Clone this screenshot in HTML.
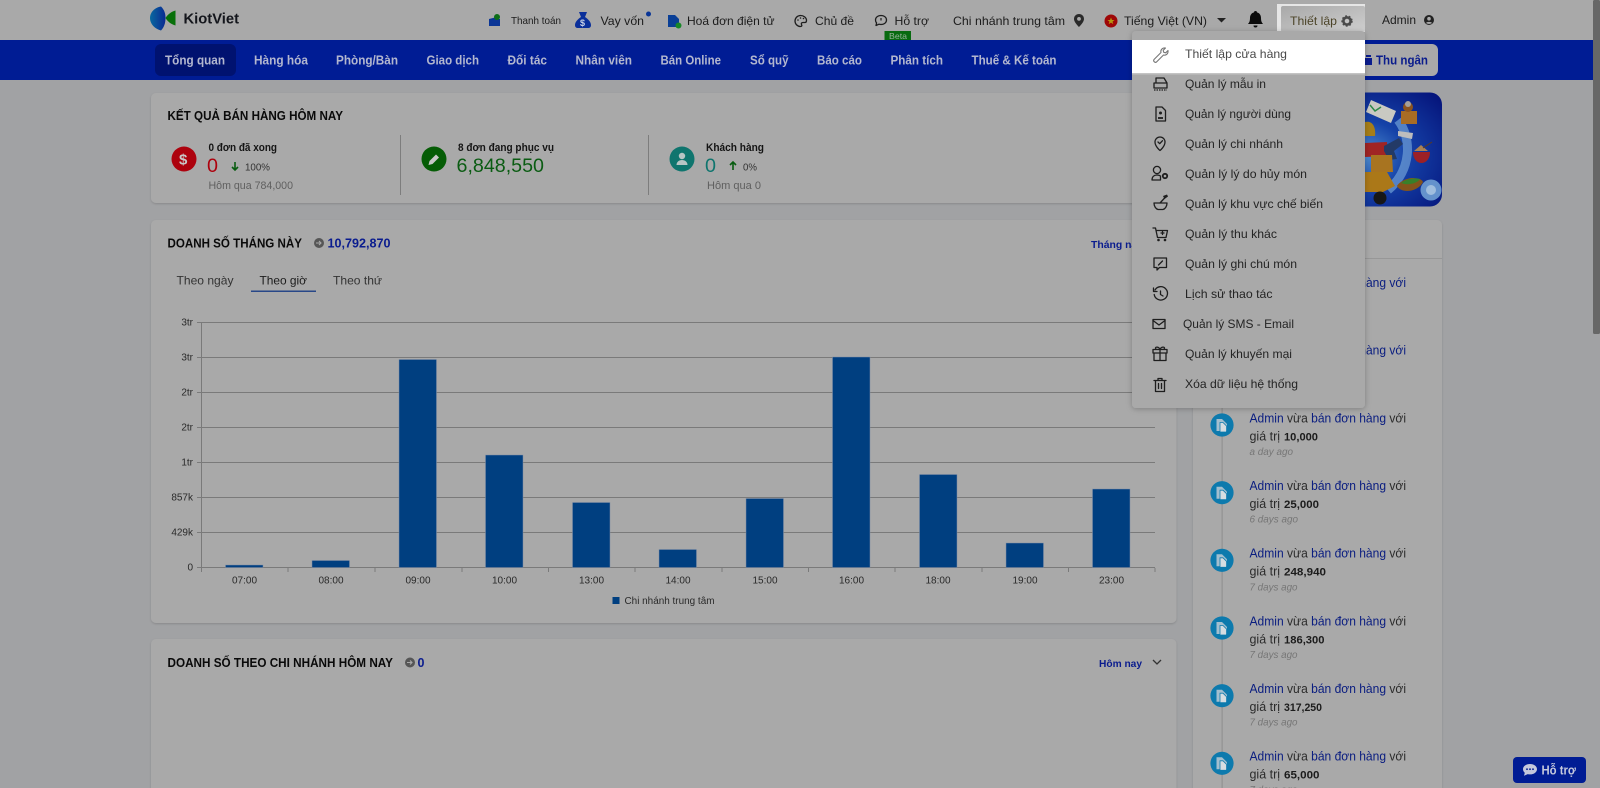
<!DOCTYPE html>
<html lang="vi">
<head>
<meta charset="utf-8">
<title>KiotViet</title>
<style>
html,body{margin:0;padding:0;width:1600px;height:788px;overflow:hidden;background:#a1a2a4}
svg{display:block;position:absolute;left:0;top:0;filter:blur(.35px)}
text{font-family:"Liberation Sans","DejaVu Sans",sans-serif;font-size:12px;fill:#1c1c1c}
.b{font-weight:700}
.nav{font-weight:700;font-size:12.5px;fill:#b3b7cf}
.m{fill:#242424;font-size:12px}
.t{font-weight:700;font-size:12.5px;fill:#0a0a0a}
.g{fill:#5f5f5f;font-size:11px}
.ax{font-size:10px;fill:#2a2a2a}
.lnk{fill:#0a1d80;font-size:12.5px}
.i{font-style:italic;font-size:10.5px;fill:#767676}
.ic{fill:none;stroke:#1e1e1e;stroke-width:1.3;stroke-linecap:round;stroke-linejoin:round}
</style>
</head>
<body>
<svg width="1600" height="788" viewBox="0 0 1600 788" xmlns="http://www.w3.org/2000/svg">
<defs>
<linearGradient id="lg" x1="0" y1="0" x2="1" y2="0"><stop offset="0" stop-color="#08689f"/><stop offset="1" stop-color="#0a2a92"/></linearGradient>
<linearGradient id="btn" x1="0" y1="0" x2="1" y2="1"><stop offset="0" stop-color="#a9a9a9"/><stop offset="1" stop-color="#cfcfcf"/></linearGradient>
<radialGradient id="bn" cx=".45" cy=".55" r=".75"><stop offset="0" stop-color="#4f8ed0"/><stop offset=".4" stop-color="#1542a8"/><stop offset="1" stop-color="#05137a"/></radialGradient>
<filter id="sh" x="-10%" y="-10%" width="120%" height="120%"><feDropShadow dx="0" dy="1" stdDeviation="3" flood-color="#000" flood-opacity=".25"/></filter>
<filter id="s2" x="-5%" y="-5%" width="110%" height="110%"><feDropShadow dx="0" dy="1" stdDeviation="1" flood-color="#000" flood-opacity=".16"/></filter>
<g id="doc"><circle r="11.600" fill="#0d7aad"/><path d="M-5.500-6h5.500l5 5v7h-10.500z" fill="#a3bfcf"/><path d="M-2-2.500h3l3.500 3.500v6h-6.500z" fill="#d6dde1" stroke="#0d7aad" stroke-width=".8"/></g>
</defs>

<rect width="1600" height="788" fill="#a1a2a4"/>
<!-- top bar -->
<rect width="1600" height="40" fill="#a9a9a9"/>
<path d="M161 6.500c-6 1-11 5.500-11 11.500s5 11 11 12.500c3-3 4.500-7.500 4.500-12.500s-1.500-8.500-4.500-11.500z" fill="url(#lg)"/>
<path d="M175.500 10.500v15c-4-1-8-4-10-7.500 2-3.500 6-6.500 10-7.500z" fill="#08700a"/>
<text x="183.500" y="23.500" class="b" style="font-size:15px;fill:#14161c" textLength="55.500" lengthAdjust="spacingAndGlyphs">KiotViet</text>

<path d="M489 19h11v7h-11z" fill="#0a3596"/><path d="M489 19l8-2v2z" fill="#0a3596"/><circle cx="497" cy="17" r="3" fill="#0d6e18"/>
<text x="511" y="24" style="font-size:10.500px" textLength="50" lengthAdjust="spacingAndGlyphs">Thanh toán</text>
<path d="M579 12h8l-2 5c3 2 6 5 6 8 0 2-1 3-3 3h-10c-2 0-3-1-3-3 0-3 3-6 6-8z" fill="#0a2f9a"/><text x="580" y="26" class="b" style="font-size:9px;fill:#c9d2e6">$</text>
<text x="600.500" y="25" textLength="43.500" lengthAdjust="spacingAndGlyphs">Vay vốn</text>
<circle cx="648.500" cy="14" r="2.500" fill="#0a3596"/>
<path d="M668 15h7l4 4v8h-11z" fill="#0a3f96"/><circle cx="678.500" cy="25.500" r="3" fill="#188828"/>
<text x="687" y="25" textLength="87.500" lengthAdjust="spacingAndGlyphs">Hoá đơn điện tử</text>
<path class="ic" d="M800.500 15.500a5.500 5.500 0 1 0 0 11c1.500 0 1.500-1 1-2s0-2 1.500-2h2c1 0 1.500-1 1.500-2 0-3-3-5-6-5z"/>
<circle cx="798" cy="20" r=".8" fill="#1e1e1e"/><circle cx="800.500" cy="18" r=".8" fill="#1e1e1e"/><circle cx="803.500" cy="18.500" r=".8" fill="#1e1e1e"/>
<text x="815" y="25" textLength="39" lengthAdjust="spacingAndGlyphs">Chủ đề</text>
<path class="ic" d="M881 15.500c3.300 0 5.500 2 5.500 4.500s-2.200 4.500-5.500 4.500c-.7 0-1.300 0-2-.3l-3 1.300.6-2.600c-.7-.8-1.100-1.800-1.100-2.900 0-2.500 2.200-4.500 5.500-4.500z"/><path d="M881 18v2.500" stroke="#1e1e1e" stroke-width="1.200"/>
<text x="894.500" y="25" textLength="34.500" lengthAdjust="spacingAndGlyphs">Hỗ trợ</text>
<rect x="884.500" y="31" width="26.500" height="10" fill="#086a10"/>
<text x="889" y="39" style="font-size:8.500px;fill:#97b29a" textLength="18" lengthAdjust="spacingAndGlyphs">Beta</text>
<text x="953" y="25" textLength="112" lengthAdjust="spacingAndGlyphs">Chi nhánh trung tâm</text>
<path d="M1079 14c-3 0-5 2.200-5 5 0 3.300 5 8 5 8s5-4.700 5-8c0-2.800-2-5-5-5zm0 6.800a1.900 1.900 0 1 1 0-3.800 1.900 1.900 0 0 1 0 3.800z" fill="#2a2a2a"/>
<circle cx="1111" cy="21" r="6.500" fill="#9e0707"/><path d="M1111 17.500l1 2.500h2.500l-2 1.600.8 2.500-2.300-1.500-2.300 1.500.8-2.500-2-1.600h2.500z" fill="#b8960f"/>
<text x="1124" y="25" textLength="83" lengthAdjust="spacingAndGlyphs">Tiếng Việt (VN)</text>
<path d="M1217 18h9l-4.500 4.500z" fill="#222"/>
<path d="M1255.500 11c-1 0-1.500.6-1.500 1.400-2.700.7-4 3-4 5.600 0 3-.7 4.500-2 6h15c-1.300-1.500-2-3-2-6 0-2.600-1.300-4.900-4-5.600 0-.8-.5-1.400-1.500-1.400zM1253.500 25.500a2 2 0 0 0 4 0z" fill="#0c0c0c"/>

<rect x="1277" y="4" width="88" height="28" fill="#e6e6e6"/>
<rect x="1281" y="6" width="84" height="26" rx="2" fill="url(#btn)"/>
<text x="1290" y="25" style="fill:#4c4428" textLength="47" lengthAdjust="spacingAndGlyphs">Thiết lập</text>
<circle cx="1347" cy="21" r="3.600" fill="none" stroke="#4a4a4a" stroke-width="2.600"/><circle cx="1347" cy="21" r="5" fill="none" stroke="#4a4a4a" stroke-width="1.400" stroke-dasharray="1.800 1.800"/>
<text x="1382" y="24" textLength="34" lengthAdjust="spacingAndGlyphs">Admin</text>
<circle cx="1429" cy="20" r="5" fill="#222"/><circle cx="1429" cy="18.700" r="1.800" fill="#a9a9a9"/><path d="M1426 23c.8-1.500 5.200-1.500 6 0-1.500 1.200-4.500 1.200-6 0z" fill="#a9a9a9"/>

<!-- nav -->
<rect y="40" width="1600" height="40" fill="#001c94"/>
<rect x="155" y="44" width="81" height="32" rx="6" fill="#001270"/>
<text x="165" y="64.500" class="nav" textLength="60" lengthAdjust="spacingAndGlyphs">Tổng quan</text>
<text x="254" y="64.500" class="nav" textLength="54" lengthAdjust="spacingAndGlyphs">Hàng hóa</text>
<text x="336" y="64.500" class="nav" textLength="62" lengthAdjust="spacingAndGlyphs">Phòng/Bàn</text>
<text x="426.500" y="64.500" class="nav" textLength="52.500" lengthAdjust="spacingAndGlyphs">Giao dịch</text>
<text x="507.500" y="64.500" class="nav" textLength="39.500" lengthAdjust="spacingAndGlyphs">Đối tác</text>
<text x="575.500" y="64.500" class="nav" textLength="56.500" lengthAdjust="spacingAndGlyphs">Nhân viên</text>
<text x="660.500" y="64.500" class="nav" textLength="60.500" lengthAdjust="spacingAndGlyphs">Bán Online</text>
<text x="750" y="64.500" class="nav" textLength="38.500" lengthAdjust="spacingAndGlyphs">Sổ quỹ</text>
<text x="817" y="64.500" class="nav" textLength="45" lengthAdjust="spacingAndGlyphs">Báo cáo</text>
<text x="890.500" y="64.500" class="nav" textLength="52.500" lengthAdjust="spacingAndGlyphs">Phân tích</text>
<text x="971.500" y="64.500" class="nav" textLength="85" lengthAdjust="spacingAndGlyphs">Thuế &amp; Kế toán</text>
<rect x="1330" y="44" width="108" height="32" rx="6" fill="#a9a9a9"/>
<path d="M1365 58h7v7h-7z" fill="#0a1c8e"/><path d="M1366 55h5v2h-5z" fill="#0a1c8e"/>
<text x="1376" y="64.500" class="b" style="fill:#0a1c8c;font-size:12.500px" textLength="52" lengthAdjust="spacingAndGlyphs">Thu ngân</text>

<!-- card 1 -->
<rect x="151" y="93" width="1025.500" height="110" rx="5" fill="#a9a9a9" filter="url(#s2)"/>
<text x="167.500" y="120" class="t" textLength="175.500" lengthAdjust="spacingAndGlyphs">KẾT QUẢ BÁN HÀNG HÔM NAY</text>
<circle cx="184" cy="159" r="12.500" fill="#ad020e"/>
<text x="179" y="164.500" class="b" style="font-size:15px;fill:#c9c9c9">$</text>
<text x="208.500" y="151" class="b" style="font-size:11px;fill:#141414" textLength="68.500" lengthAdjust="spacingAndGlyphs">0 đơn đã xong</text>
<text x="207" y="172" style="font-size:19px;fill:#ad020e" textLength="11" lengthAdjust="spacingAndGlyphs">0</text>
<path d="M235 162v8m-3-3l3 3 3-3" fill="none" stroke="#085c10" stroke-width="1.600"/>
<text x="245" y="170.500" style="font-size:10.500px;fill:#333" textLength="25" lengthAdjust="spacingAndGlyphs">100%</text>
<text x="208.500" y="189" class="g" textLength="84.500" lengthAdjust="spacingAndGlyphs">Hôm qua 784,000</text>
<rect x="400" y="135" width="1" height="60" fill="#7d7d7d"/>
<circle cx="434" cy="159" r="12.500" fill="#055c05"/>
<path d="M428.500 165l1-4 6.500-6.500 3 3-6.500 6.500z" fill="#c7c7c7"/>
<text x="458" y="151" class="b" style="font-size:11px;fill:#141414" textLength="96" lengthAdjust="spacingAndGlyphs">8 đơn đang phục vụ</text>
<text x="456.500" y="172" style="font-size:19px;fill:#0b5c13" textLength="87.500" lengthAdjust="spacingAndGlyphs">6,848,550</text>
<rect x="648" y="135" width="1" height="60" fill="#7d7d7d"/>
<circle cx="682" cy="159" r="12.500" fill="#0f756e"/>
<circle cx="682" cy="156" r="3.200" fill="#b7c5c4"/><path d="M676.500 165c0-3 2.500-5 5.500-5s5.500 2 5.500 5z" fill="#b7c5c4"/>
<text x="706" y="151" class="b" style="font-size:11px;fill:#141414" textLength="58" lengthAdjust="spacingAndGlyphs">Khách hàng</text>
<text x="705" y="172" style="font-size:19px;fill:#0f756e" textLength="11" lengthAdjust="spacingAndGlyphs">0</text>
<path d="M733 170v-8m-3 3l3-3 3 3" fill="none" stroke="#085c10" stroke-width="1.600"/>
<text x="743" y="170.500" style="font-size:10.500px;fill:#333" textLength="14" lengthAdjust="spacingAndGlyphs">0%</text>
<text x="707" y="189" class="g" textLength="54" lengthAdjust="spacingAndGlyphs">Hôm qua 0</text>

<!-- banner -->
<path d="M1300 92.500h130a12 12 0 0 1 12 12v90a12 12 0 0 1-12 12h-130z" fill="url(#bn)"/>
<path d="M1398 120c14 18 14 50-10 70" fill="none" stroke="#6f9fd6" stroke-width="9" opacity=".7"/>
<path d="M1371 100l25 11-5 12-25-11z" fill="#c9c9c2"/>
<path d="M1370 105l5 6 6-4" fill="none" stroke="#2d8a4a" stroke-width="1.500"/>
<path d="M1401 111h16v13h-16z" fill="#a86c24"/><circle cx="1408" cy="107" r="5" fill="#8c5420"/><circle cx="1408" cy="104" r="3" fill="#a5a09a"/>
<path d="M1365 122c8-2 11 6 10 14h-10z" fill="#a67e18"/>
<path d="M1365 143l22-1 1 14-23 1z" fill="#a02424"/>
<path d="M1384 146l15-8 4 6-9 7 3 8-8 1-5-9z" fill="#233a66"/>
<path d="M1398 131l15 2-1 6-14-3z" fill="#bdbdbd"/>
<path d="M1371 155h21l1 17h-22z" fill="#a87420"/>
<path d="M1365 172h22l8 14-12 6h-18z" fill="#ab7818"/>
<circle cx="1380" cy="198" r="6.500" fill="#171717"/>
<path d="M1413 152h17c0 7-4 11-8.500 11s-8.500-4-8.500-11z" fill="#9c2026"/><path d="M1414 151l7-6 7 6z" fill="#ab8254"/><path d="M1423 148l9-6" stroke="#5a3a20" stroke-width="1"/>
<path d="M1397 186c2-4 8-7 14-8 6 0 11 1 12 4-3 6-10 9-16 9-4 0-9-2-10-5z" fill="#84541c"/><path d="M1401 183c3-3 13-6 19-4-2 4-12 7-19 4z" fill="#38802a"/>
<circle cx="1431" cy="190" r="10.500" fill="#6492cc"/><circle cx="1431" cy="190" r="5" fill="#a0bede"/>

<!-- card 2 -->
<rect x="151" y="220" width="1025.500" height="403" rx="5" fill="#a9a9a9" filter="url(#s2)"/>
<text x="167.500" y="247.500" class="t" textLength="134.500" lengthAdjust="spacingAndGlyphs">DOANH SỐ THÁNG NÀY</text>
<circle cx="319" cy="243" r="5" fill="#565656"/><path d="M316 243h5m-2-2l2 2-2 2" stroke="#a9a9a9" fill="none" stroke-width="1.100"/>
<text x="327.500" y="247.500" class="b" style="font-size:12.500px;fill:#0a1c8e" textLength="63" lengthAdjust="spacingAndGlyphs">10,792,870</text>
<text x="1091" y="248" class="b" style="font-size:10.500px;fill:#0a1c8e" textLength="52" lengthAdjust="spacingAndGlyphs">Tháng này</text>
<text x="176.500" y="284.500" style="font-size:12px;fill:#333" textLength="57" lengthAdjust="spacingAndGlyphs">Theo ngày</text>
<text x="259.500" y="284.500" style="font-size:12px;fill:#1c1c1c" textLength="47.500" lengthAdjust="spacingAndGlyphs">Theo giờ</text>
<rect x="251" y="290.500" width="65" height="1.500" fill="#284788"/>
<text x="333" y="284.500" style="font-size:12px;fill:#333" textLength="49" lengthAdjust="spacingAndGlyphs">Theo thứ</text>

<g stroke="#7a7a7a" stroke-width="1">
<path d="M197 322.500h958M197 357.500h958M197 392.500h958M197 427.500h958M197 462.500h958M197 497.500h958M197 532.500h958M197 567.500h958"/>
<path d="M201.500 322v250M288 568v4M375 568v4M462 568v4M548.500 568v4M635 568v4M722 568v4M808.500 568v4M895 568v4M982 568v4M1068.500 568v4M1155 568v4"/>
</g>
<g fill="#003f80" stroke="#7f8ea6" stroke-width=".5">
<rect x="225.500" y="565" width="37.500" height="2.500"/>
<rect x="312" y="560.500" width="37.500" height="7"/>
<rect x="399" y="359.500" width="37.500" height="208"/>
<rect x="485.500" y="455" width="37.500" height="112.500"/>
<rect x="572.500" y="502.500" width="37.500" height="65"/>
<rect x="659" y="549.500" width="37.500" height="18"/>
<rect x="746" y="498.500" width="37.500" height="69"/>
<rect x="832.500" y="357" width="37.500" height="210.500"/>
<rect x="919.500" y="474.500" width="37.500" height="93"/>
<rect x="1006" y="543" width="37.500" height="24.500"/>
<rect x="1092.500" y="489" width="37.500" height="78.500"/>
</g>
<g class="ax" text-anchor="end">
<text x="193" y="325.500" class="ax">3tr</text>
<text x="193" y="360.500" class="ax">3tr</text>
<text x="193" y="395.500" class="ax">2tr</text>
<text x="193" y="430.500" class="ax">2tr</text>
<text x="193" y="465.500" class="ax">1tr</text>
<text x="193" y="500.500" class="ax">857k</text>
<text x="193" y="535.500" class="ax">429k</text>
<text x="193" y="570.500" class="ax">0</text>
</g>
<g text-anchor="middle">
<text x="244.500" y="583.500" class="ax">07:00</text>
<text x="331" y="583.500" class="ax">08:00</text>
<text x="418" y="583.500" class="ax">09:00</text>
<text x="504.500" y="583.500" class="ax">10:00</text>
<text x="591.500" y="583.500" class="ax">13:00</text>
<text x="678" y="583.500" class="ax">14:00</text>
<text x="765" y="583.500" class="ax">15:00</text>
<text x="851.500" y="583.500" class="ax">16:00</text>
<text x="938" y="583.500" class="ax">18:00</text>
<text x="1025" y="583.500" class="ax">19:00</text>
<text x="1111.500" y="583.500" class="ax">23:00</text>
</g>
<rect x="612.500" y="597" width="7" height="7" fill="#003f80"/>
<text x="624.500" y="604" class="ax" textLength="90" lengthAdjust="spacingAndGlyphs">Chi nhánh trung tâm</text>

<!-- card 3 -->
<rect x="151" y="639" width="1025.500" height="160" rx="5" fill="#a9a9a9" filter="url(#s2)"/>
<text x="167.500" y="667" class="t" textLength="225.500" lengthAdjust="spacingAndGlyphs">DOANH SỐ THEO CHI NHÁNH HÔM NAY</text>
<circle cx="410" cy="662.500" r="5" fill="#565656"/><path d="M407 662.500h5m-2-2l2 2-2 2" stroke="#a9a9a9" fill="none" stroke-width="1.100"/>
<text x="417.500" y="667" class="b" style="font-size:12.500px;fill:#0a1c8e">0</text>
<text x="1099" y="667" class="b" style="font-size:10.500px;fill:#0a1c8e" textLength="43" lengthAdjust="spacingAndGlyphs">Hôm nay</text>
<path d="M1153 660l4 4 4-4" fill="none" stroke="#333" stroke-width="1.300"/>

<!-- activity card -->
<rect x="1193" y="220" width="249" height="580" rx="5" fill="#a9a9a9" filter="url(#s2)"/>
<rect x="1193" y="258" width="249" height="1" fill="#979797"/>
<rect x="1221.500" y="270" width="1.200" height="518" fill="#929292"/>
<text x="1249.500" y="287" class="lnk" textLength="156.500" lengthAdjust="spacingAndGlyphs">Admin vừa bán đơn hàng với</text>
<text x="1249.500" y="354.500" class="lnk" textLength="156.500" lengthAdjust="spacingAndGlyphs">Admin vừa bán đơn hàng với</text>

<use href="#doc" x="1222" y="425"/>
<text x="1249.500" y="422.500" class="lnk" textLength="156.500" lengthAdjust="spacingAndGlyphs"><tspan>Admin</tspan> <tspan fill="#2b2b2b">vừa</tspan> bán đơn hàng <tspan fill="#2b2b2b">với</tspan></text>
<text x="1249.500" y="440.500" style="font-size:12.500px;fill:#2b2b2b" textLength="30.500" lengthAdjust="spacingAndGlyphs">giá trị</text>
<text x="1284" y="440.500" class="b" style="font-size:11px" textLength="34" lengthAdjust="spacingAndGlyphs">10,000</text>
<text x="1249.500" y="455" class="i" textLength="43.500" lengthAdjust="spacingAndGlyphs">a day ago</text>

<use href="#doc" x="1222" y="492.700"/>
<text x="1249.500" y="490" class="lnk" textLength="156.500" lengthAdjust="spacingAndGlyphs"><tspan>Admin</tspan> <tspan fill="#2b2b2b">vừa</tspan> bán đơn hàng <tspan fill="#2b2b2b">với</tspan></text>
<text x="1249.500" y="508" style="font-size:12.500px;fill:#2b2b2b" textLength="30.500" lengthAdjust="spacingAndGlyphs">giá trị</text>
<text x="1284" y="508" class="b" style="font-size:11px" textLength="35" lengthAdjust="spacingAndGlyphs">25,000</text>
<text x="1249.500" y="522.700" class="i" textLength="48.500" lengthAdjust="spacingAndGlyphs">6 days ago</text>

<use href="#doc" x="1222" y="560.300"/>
<text x="1249.500" y="557.700" class="lnk" textLength="156.500" lengthAdjust="spacingAndGlyphs"><tspan>Admin</tspan> <tspan fill="#2b2b2b">vừa</tspan> bán đơn hàng <tspan fill="#2b2b2b">với</tspan></text>
<text x="1249.500" y="575.700" style="font-size:12.500px;fill:#2b2b2b" textLength="30.500" lengthAdjust="spacingAndGlyphs">giá trị</text>
<text x="1284" y="575.700" class="b" style="font-size:11px" textLength="42" lengthAdjust="spacingAndGlyphs">248,940</text>
<text x="1249.500" y="590.300" class="i" textLength="48" lengthAdjust="spacingAndGlyphs">7 days ago</text>

<use href="#doc" x="1222" y="628"/>
<text x="1249.500" y="625.300" class="lnk" textLength="156.500" lengthAdjust="spacingAndGlyphs"><tspan>Admin</tspan> <tspan fill="#2b2b2b">vừa</tspan> bán đơn hàng <tspan fill="#2b2b2b">với</tspan></text>
<text x="1249.500" y="643.300" style="font-size:12.500px;fill:#2b2b2b" textLength="30.500" lengthAdjust="spacingAndGlyphs">giá trị</text>
<text x="1284" y="643.300" class="b" style="font-size:11px" textLength="40.500" lengthAdjust="spacingAndGlyphs">186,300</text>
<text x="1249.500" y="658" class="i" textLength="48" lengthAdjust="spacingAndGlyphs">7 days ago</text>

<use href="#doc" x="1222" y="695.700"/>
<text x="1249.500" y="693" class="lnk" textLength="156.500" lengthAdjust="spacingAndGlyphs"><tspan>Admin</tspan> <tspan fill="#2b2b2b">vừa</tspan> bán đơn hàng <tspan fill="#2b2b2b">với</tspan></text>
<text x="1249.500" y="711" style="font-size:12.500px;fill:#2b2b2b" textLength="30.500" lengthAdjust="spacingAndGlyphs">giá trị</text>
<text x="1284" y="711" class="b" style="font-size:11px" textLength="38" lengthAdjust="spacingAndGlyphs">317,250</text>
<text x="1249.500" y="725.700" class="i" textLength="48" lengthAdjust="spacingAndGlyphs">7 days ago</text>

<use href="#doc" x="1222" y="763.300"/>
<text x="1249.500" y="760.700" class="lnk" textLength="156.500" lengthAdjust="spacingAndGlyphs"><tspan>Admin</tspan> <tspan fill="#2b2b2b">vừa</tspan> bán đơn hàng <tspan fill="#2b2b2b">với</tspan></text>
<text x="1249.500" y="778.700" style="font-size:12.500px;fill:#2b2b2b" textLength="30.500" lengthAdjust="spacingAndGlyphs">giá trị</text>
<text x="1284" y="778.700" class="b" style="font-size:11px" textLength="35.500" lengthAdjust="spacingAndGlyphs">65,000</text>
<text x="1249.500" y="793" class="i" textLength="48" lengthAdjust="spacingAndGlyphs">7 days ago</text>

<!-- dropdown -->
<rect x="1132" y="31" width="233" height="377" rx="4" fill="#a9a9a9" filter="url(#sh)"/>
<rect x="1132" y="40" width="233" height="33" fill="#ffffff"/>
<rect x="1132" y="73" width="233" height="1.500" fill="#c4c4c4"/>
<g class="m">
<text x="1185" y="58" class="m" style="fill:#4a4a4a" textLength="102" lengthAdjust="spacingAndGlyphs">Thiết lập cửa hàng</text>
<text x="1185" y="88" class="m" textLength="81" lengthAdjust="spacingAndGlyphs">Quản lý mẫu in</text>
<text x="1185" y="118" class="m" textLength="106" lengthAdjust="spacingAndGlyphs">Quản lý người dùng</text>
<text x="1185" y="148" class="m" textLength="98" lengthAdjust="spacingAndGlyphs">Quản lý chi nhánh</text>
<text x="1185" y="178" class="m" textLength="122" lengthAdjust="spacingAndGlyphs">Quản lý lý do hủy món</text>
<text x="1185" y="208" class="m" textLength="138" lengthAdjust="spacingAndGlyphs">Quản lý khu vực chế biến</text>
<text x="1185" y="238" class="m" textLength="92" lengthAdjust="spacingAndGlyphs">Quản lý thu khác</text>
<text x="1185" y="268" class="m" textLength="112" lengthAdjust="spacingAndGlyphs">Quản lý ghi chú món</text>
<text x="1185" y="298" class="m" textLength="87.500" lengthAdjust="spacingAndGlyphs">Lịch sử thao tác</text>
<text x="1183" y="328" class="m" textLength="111" lengthAdjust="spacingAndGlyphs">Quản lý SMS - Email</text>
<text x="1185" y="358" class="m" textLength="107" lengthAdjust="spacingAndGlyphs">Quản lý khuyến mại</text>
<text x="1185" y="388" class="m" textLength="113" lengthAdjust="spacingAndGlyphs">Xóa dữ liệu hệ thống</text>
</g>
<!-- menu icons -->
<path d="M1154 59.500l7-7c-.7-2.200 1-5 4.500-4.500l-2.300 2.300.5 2 2 .5 2.300-2.300c.5 3.500-2.300 5.200-4.500 4.500l-7 7a1.800 1.800 0 0 1-2.500-2.500z" fill="none" stroke="#777" stroke-width="1.100" stroke-linejoin="round"/>
<path class="ic" d="M1156 83v-5h8l3 5M1154 83h13v5h-13z"/><path d="M1154 90h13" stroke="#1e1e1e" stroke-width="1.300" stroke-dasharray="1.500 1"/>
<path class="ic" d="M1156 107h6l3.500 3.500v10.500h-9.500z"/><circle cx="1160.500" cy="113" r="1.500" fill="#1e1e1e"/><path d="M1158 118h5" stroke="#1e1e1e" stroke-width="1.800"/>
<path class="ic" d="M1160 150.500s-5-4-5-8.500a5 5 0 0 1 10 0c0 4.500-5 8.500-5 8.500z"/><path class="ic" d="M1158 142l1.700 1.700 2.800-3"/>
<circle cx="1157" cy="170" r="3.600" class="ic"/><path class="ic" d="M1152 180c0-3.500 2.200-5 5-5 1.500 0 2.500.3 3.500 1v4z"/><circle cx="1165" cy="176" r="2.200" fill="none" stroke="#1e1e1e" stroke-width="1.800"/>
<path class="ic" d="M1154 203h13c0 3.500-2 6-4 6.500h-5c-2-.5-4-3-4-6.500zM1160 203l6-6.500"/><path d="M1163 196l4-1.500 1 2-3.500 2.500z" fill="#1e1e1e"/>
<path class="ic" d="M1153 228h2.500l2 9.500h8.500l1.500-7h-11M1161 233h3M1162.500 231.500v3"/><circle cx="1158.500" cy="240" r="1.300" fill="#1e1e1e"/><circle cx="1165" cy="240" r="1.300" fill="#1e1e1e"/>
<path class="ic" d="M1154 258h12.500v9.500h-7l-2.500 2.500v-2.500h-3zM1158.500 265l4-4"/>
<path class="ic" d="M1155 290a6.700 6.700 0 1 1-.8 4.500M1153.500 288v3.500h3.500M1160.500 291v3.500l2.500 1.500"/>
<rect x="1153" y="319.500" width="12" height="9" class="ic"/><path class="ic" d="M1153 320.500l6 4.500 6-4.500"/>
<path class="ic" d="M1154 353h12v7.500h-12zM1153 349.500h14v3.500h-14zM1160 349.500v11M1160 349.500c-1-3-5-3-4.500-1 .3 1 2.500 1 4.500 1zM1160 349.500c1-3 5-3 4.500-1-.3 1-2.500 1-4.500 1z"/>
<path class="ic" d="M1155.500 380.500h9v11h-9zM1154 380.500h12M1158 380.500v-2h4v2M1158.500 383.500v5M1161.500 383.500v5"/>

<!-- scrollbar -->
<rect x="1593" y="0" width="7" height="334" rx="1.500" fill="#676767"/>

<!-- support button -->
<rect x="1513" y="757" width="73" height="26" rx="4" fill="#001c94"/>
<path d="M1530 764c4 0 7 2.300 7 5.200s-3 5.200-7 5.200c-.8 0-1.500-.1-2.200-.3l-3.800 1.700.8-3c-1-.9-1.800-2.200-1.800-3.600 0-2.900 3-5.200 7-5.200z" fill="#c4c8dc"/>
<circle cx="1527" cy="769.200" r=".9" fill="#001c94"/><circle cx="1530" cy="769.200" r=".9" fill="#001c94"/><circle cx="1533" cy="769.200" r=".9" fill="#001c94"/>
<text x="1541.500" y="774.500" class="b" style="font-size:12.500px;fill:#c4c8dc" textLength="34.500" lengthAdjust="spacingAndGlyphs">Hỗ trợ</text>
</svg>
</body>
</html>
